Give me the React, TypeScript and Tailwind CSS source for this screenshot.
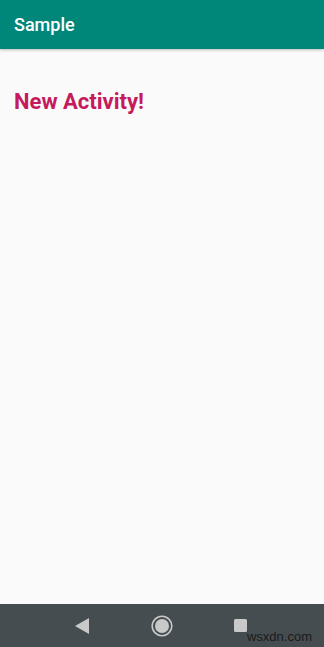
export default function App() {
  return (
    <div className="flex flex-col h-[647px] w-[324px] bg-[#fafafa] font-['Roboto',sans-serif] overflow-hidden">
      <header className="h-[49px] shrink-0 bg-[#00877a] flex items-center px-[14px] shadow-[0_1px_3px_rgba(0,0,0,0.25)] z-10">
        <h1 className="text-[18px] font-medium text-white leading-none">Sample</h1>
      </header>

      <main className="flex-1 px-[14px] pt-[42px]">
        <p className="text-[22px] font-bold text-[#c51a5c] leading-none">New Activity!</p>
      </main>

      <nav className="h-[43px] shrink-0 bg-[#454d51] relative flex items-center">
        <div className="flex items-center w-full pl-[75px]">
          <svg width="14" height="16" viewBox="0 0 14 16" className="shrink-0">
            <path d="M14 0 L0 8 L14 16 Z" fill="#c9c9c9" />
          </svg>
          <svg width="22" height="22" viewBox="0 0 22 22" className="shrink-0 ml-[62px]">
            <circle cx="11" cy="11" r="9.8" fill="none" stroke="#c9c9c9" strokeWidth="1.6" />
            <circle cx="11" cy="11" r="7" fill="#c9c9c9" />
          </svg>
          <div className="shrink-0 ml-[61px] w-[13px] h-[13px] rounded-[1.5px] bg-[#c9c9c9]" />
        </div>
        <span className="absolute right-[12px] bottom-[1px] text-[13px] text-[#1a1a1a] font-['Liberation_Sans',sans-serif]">
          wsxdn.com
        </span>
      </nav>
    </div>
  );
}
